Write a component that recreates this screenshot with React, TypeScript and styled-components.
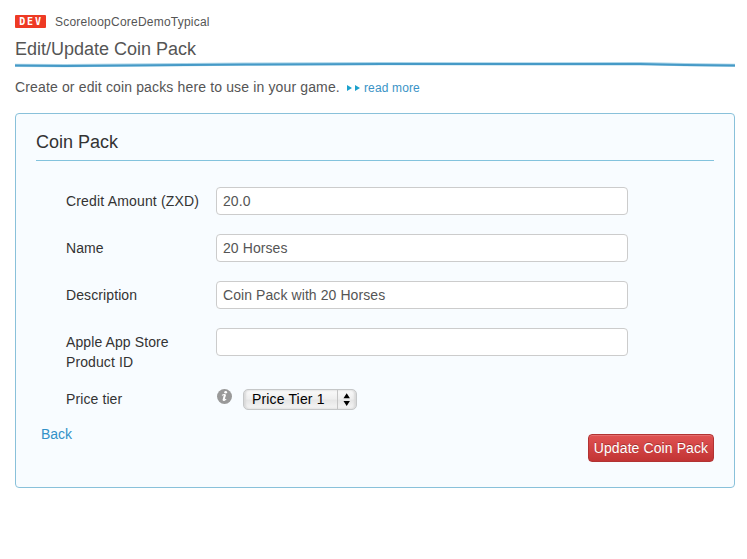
import React from "react";
import styled, { createGlobalStyle } from "styled-components";

const GlobalStyle = createGlobalStyle`
  * { box-sizing: border-box; }
  body {
    margin: 0;
    background: #fff;
    color: #555;
    font: 14px/20px "Liberation Sans", Arial, sans-serif;
  }
`;

const Page = styled.main`
  padding: 14px 12px 0 15px;
`;

const GameBar = styled.div`
  display: flex;
  align-items: center;
  height: 16px;
  gap: 9px;
`;

const EnvBadge = styled.span`
  width: 31px;
  height: 13px;
  margin-top: -1px;
  padding-left: 1px;
  border-radius: 1px;
  background: #ee3a24;
  color: #fff;
  text-align: center;
  font: bold 10px/13px "DejaVu Sans Mono", monospace;
  letter-spacing: 1.8px;
`;

const GameName = styled.span`
  font-size: 12px;
  line-height: 16px;
  letter-spacing: 0.22px;
`;

const PageTitle = styled.h1`
  height: 32px;
  margin: 0;
  padding-top: 7px;
  font-size: 18px;
  line-height: 24px;
  font-weight: normal;
`;

const BrushLine = styled.svg`
  display: block;
  width: 720px;
  height: 6px;
`;

const Intro = styled.p`
  display: flex;
  align-items: center;
  height: 20px;
  margin: 9px 0 16px;
`;

const IntroText = styled.span`
  letter-spacing: 0.145px;
`;

const ReadMore = styled.a`
  display: flex;
  align-items: center;
  gap: 4px;
  margin: 1px 0 0 7px;
  color: #3a93c6;
  font-size: 12px;
  text-decoration: none;
  letter-spacing: 0.15px;
`;

const Panel = styled.section`
  height: 375px;
  padding: 17px 20px 0;
  border: 1px solid #89c1da;
  border-radius: 4px;
  background: #f8fcff;
  color: #333;
`;

const PanelTitle = styled.h2`
  height: 30px;
  margin: 0;
  border-bottom: 1px solid #83c3dd;
  font-size: 18px;
  line-height: 22px;
  font-weight: normal;
`;

const Fields = styled.form`
  padding: 26px 0 0 30px;
`;

const Field = styled.div<{ $height?: number }>`
  display: grid;
  grid-template-columns: 150px 412px;
  align-items: start;
  height: ${(p) => p.$height ?? 47}px;
`;

const Label = styled.label<{ $top?: number; $spacing?: number }>`
  width: 140px;
  padding-top: ${(p) => p.$top ?? 4}px;
  letter-spacing: ${(p) => p.$spacing ?? 0.1}px;
`;

const TextInput = styled.input`
  width: 412px;
  height: 28px;
  padding: 0 6px;
  border: 1px solid #ccc;
  border-radius: 4px;
  background: #fff;
  color: #555;
  font: 14px/20px "Liberation Sans", Arial, sans-serif;
  letter-spacing: 0.08px;
`;

const TierControl = styled.div`
  display: flex;
  align-items: flex-start;
  padding: 2px 0 0 1px;
  gap: 11px;
`;

const InfoIcon = styled.svg`
  width: 15px;
  height: 15px;
`;

const TierSelect = styled.button`
  display: flex;
  width: 114px;
  height: 21px;
  padding: 0;
  border: 1px solid #c5c7c8;
  border-radius: 5px;
  background: linear-gradient(#fafafa, #efefef 45%, #e6e6e6 55%, #f5f5f5);
  box-shadow: inset 2px 0 2px #dadada, inset -2px 0 2px #dadada;
  color: #000;
  font: 14px/19px "Liberation Sans", Arial, sans-serif;
`;

const TierValue = styled.span`
  width: 94px;
  padding-left: 8px;
  border-right: 1px solid #c4c4c4;
  text-align: left;
  letter-spacing: 0.15px;
`;

const Arrows = styled.svg`
  width: 18px;
  height: 19px;
`;

const Actions = styled.footer`
  display: flex;
  justify-content: space-between;
  padding-left: 5px;
`;

const BackLink = styled.a`
  height: 20px;
  margin-top: -10px;
  color: #3291c8;
  text-decoration: none;
`;

const SubmitButton = styled.button`
  width: 126px;
  height: 28px;
  padding: 0;
  border: 1px solid #b23333;
  border-radius: 4px;
  background: linear-gradient(#e05252, #c23434);
  box-shadow: inset 0 1px 0 #e36e6e;
  color: #fff;
  font: 14px/20px "Liberation Sans", Arial, sans-serif;
  letter-spacing: 0.1px;
  white-space: nowrap;
  text-shadow: 0 -1px 0 rgba(0, 0, 0, 0.25);
`;

const textFields = [
  { id: "credit", label: "Credit Amount (ZXD)", value: "20.0", spacing: 0.17 },
  { id: "name", label: "Name", value: "20 Horses" },
  { id: "description", label: "Description", value: "Coin Pack with 20 Horses" },
  { id: "product", label: "Apple App Store Product ID", value: "", height: 59 },
];

export default function App() {
  return (
    <>
      <GlobalStyle />
      <Page>
        <GameBar>
          <EnvBadge>DEV</EnvBadge>
          <GameName>ScoreloopCoreDemoTypical</GameName>
        </GameBar>
        <PageTitle>Edit/Update Coin Pack</PageTitle>
        <BrushLine viewBox="0 0 720 6" fill="none" aria-hidden="true">
          <path
            d="M0 3.3 L50 3.7 L110 3.1 L230 2.2 L370 1.7 L530 1.8 L625 1.7 L670 2.7 L720 3.4"
            stroke="#a9d4e8"
            strokeWidth="3.2"
          />
          <path
            d="M0 3.5 L50 4 L110 3.5 L230 2.5 L370 2 L530 2.1 L625 2 L670 3 L720 3.6"
            stroke="#469ac7"
            strokeWidth="2"
          />
        </BrushLine>
        <Intro>
          <IntroText>Create or edit coin packs here to use in your game.</IntroText>
          <ReadMore href="#">
            <svg width="13" height="6" viewBox="0 0 13 6" aria-hidden="true">
              <path d="M0 0 L5 3 L0 6Z M8 0 L13 3 L8 6Z" fill="#1da1cc" />
            </svg>
            read more
          </ReadMore>
        </Intro>
        <Panel>
          <PanelTitle>Coin Pack</PanelTitle>
          <Fields>
            {textFields.map((field) => (
              <Field key={field.id} $height={field.height}>
                <Label htmlFor={field.id} $spacing={field.spacing}>
                  {field.label}
                </Label>
                <TextInput id={field.id} defaultValue={field.value} />
              </Field>
            ))}
            <Field>
              <Label as="span" $top={2}>
                Price tier
              </Label>
              <TierControl>
                <InfoIcon viewBox="0 0 15 15" aria-hidden="true">
                  <circle cx="7.5" cy="7.5" r="7.5" fill="#999" />
                  <ellipse cx="8.7" cy="3.3" rx="1.4" ry="1.2" fill="#fff" />
                  <path
                    d="M5 6.4 Q6.8 5.1 8.2 5.7 L6.7 11.4 Q7.6 11.6 9.2 10.2"
                    fill="none"
                    stroke="#fff"
                    strokeWidth="1.1"
                    strokeLinejoin="round"
                  />
                  <path d="M7.9 5.7 L6.4 11.6" stroke="#fff" strokeWidth="1.9" />
                </InfoIcon>
                <TierSelect type="button">
                  <TierValue>Price Tier 1</TierValue>
                  <Arrows viewBox="0 0 18 19" aria-hidden="true">
                    <path d="M5.5 8.3 L8.7 3.3 L11.9 8.3Z M5.5 11 L8.7 16 L11.9 11Z" fill="#000" />
                  </Arrows>
                </TierSelect>
              </TierControl>
            </Field>
          </Fields>
          <Actions>
            <BackLink href="#">Back</BackLink>
            <SubmitButton type="button">Update Coin Pack</SubmitButton>
          </Actions>
        </Panel>
      </Page>
    </>
  );
}
